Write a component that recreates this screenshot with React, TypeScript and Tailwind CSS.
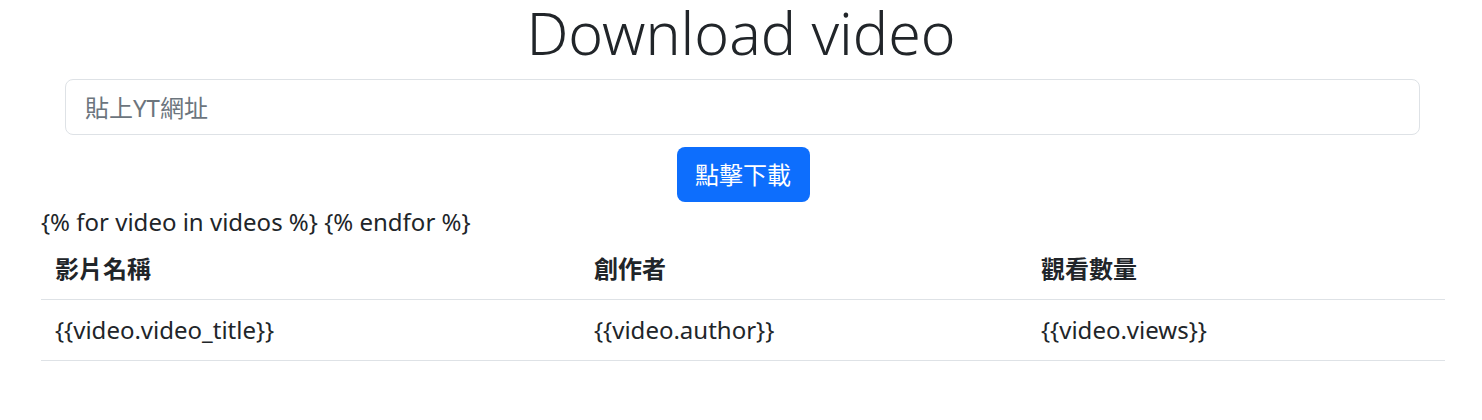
import React from "react";

export default function App() {
  const font = { fontFamily: '"Noto Sans", "Noto Sans CJK TC", sans-serif' };
  return (
    <div className="w-[1482px] h-[420px] bg-white text-[#212529] overflow-hidden" style={font}>
      <h1 className="text-center text-[59px] font-light leading-[59px] pt-[3px] h-[79px]">Download video</h1>
      <div className="px-[65px] pr-[62px]">
        <input
          className="block w-full h-[56px] rounded-[8px] border border-[#dee2e6] px-[19px] text-[24px] placeholder:text-[#6c757d] outline-none"
          placeholder="貼上YT網址"
        />
      </div>
      <div className="flex justify-center mt-[12px]">
        <button className="h-[55px] w-[133px] rounded-[8px] bg-[#0d6efd] text-white text-[24px] ml-[4px]">點擊下載</button>
      </div>
      <div className="mx-[41px] w-[1404px]">
        <div className="text-[24px] leading-[30px] mt-[5px]">{"{% for video in videos %} {% endfor %}"}</div>
        <table className="w-full text-[24px] border-collapse mt-[3px]">
          <thead>
            <tr className="border-b border-[#dee2e6] h-[59px]">
              <th className="text-left font-bold pl-[14px] w-[539px]">影片名稱</th>
              <th className="text-left font-bold pl-[14px] w-[447px]">創作者</th>
              <th className="text-left font-bold pl-[14px]">觀看數量</th>
            </tr>
          </thead>
          <tbody>
            <tr className="border-b border-[#dee2e6] h-[61px]">
              <td className="pl-[14px]">{"{{video.video_title}}"}</td>
              <td className="pl-[14px]">{"{{video.author}}"}</td>
              <td className="pl-[14px]">{"{{video.views}}"}</td>
            </tr>
          </tbody>
        </table>
      </div>
    </div>
  );
}
